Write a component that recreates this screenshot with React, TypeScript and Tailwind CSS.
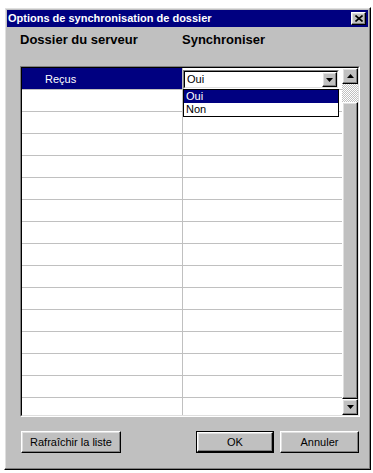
import React from 'react';

const raised =
  'border border-t-white border-l-white border-r-black border-b-black shadow-[inset_-1px_-1px_0_#808080,inset_1px_1px_0_#dfdfdf]';

const Win95Button: React.FC<{ label: string; width: string; isDefault?: boolean }> = ({
  label,
  width,
  isDefault,
}) => (
  <div className={`${width} h-[22px] ${isDefault ? 'border border-black' : ''}`}>
    <button
      className={`w-full h-full bg-[#c0c0c0] ${raised} text-[11px] text-black flex items-center justify-center`}
    >
      {label}
    </button>
  </div>
);

const ScrollArrow: React.FC<{ up?: boolean }> = ({ up }) => (
  <div className={`w-[16px] h-[16px] bg-[#c0c0c0] ${raised} flex items-center justify-center`}>
    <svg width="7" height="4" viewBox="0 0 7 4">
      {up ? <path d="M3.5 0 L7 4 L0 4 Z" fill="black" /> : <path d="M0 0 L7 0 L3.5 4 Z" fill="black" />}
    </svg>
  </div>
);

export default function App() {
  const rows = Array.from({ length: 16 }, (_, i) => i);

  return (
    <div
      className="w-[373px] h-[473px] bg-white pt-[7px] pl-[4px] overflow-hidden"
      style={{ fontFamily: '"Liberation Sans", Arial, sans-serif' }}
    >
      {/* Window */}
      <div className={`w-[367px] h-[463px] bg-[#c0c0c0] ${raised} p-[2px] flex flex-col`}>
        {/* Title bar */}
        <div className="h-[17px] bg-[#000080] flex items-center justify-between pl-[1px] pr-[2px]">
          <span className="text-white text-[11px] font-bold leading-none">
            Options de synchronisation de dossier
          </span>
          <div className={`w-[15px] h-[13px] bg-[#c0c0c0] ${raised} flex items-center justify-center`}>
            <svg width="8" height="7" viewBox="0 0 8 7">
              <path d="M0.5 0.5 L7.5 6.5 M7.5 0.5 L0.5 6.5" stroke="black" strokeWidth="1.6" />
            </svg>
          </div>
        </div>

        {/* Column headers */}
        <div className="flex mt-[3px] pl-[13px] h-[20px] items-center">
          <span className="w-[162px] text-[13px] font-bold text-black">Dossier du serveur</span>
          <span className="text-[13px] font-bold text-black">Synchroniser</span>
        </div>

        {/* List */}
        <div className="relative ml-[13px] mt-[16px] w-[340px] h-[351px] border border-t-[#808080] border-l-[#808080] border-r-white border-b-white">
          <div className="w-full h-full border border-t-black border-l-black border-r-[#dfdfdf] border-b-[#dfdfdf] bg-white flex">
            <div className="flex-1 overflow-hidden">
              {rows.map((i) => (
                <div key={i} className="flex h-[22px] border-b border-[#c0c0c0]">
                  <div
                    className={`w-[161px] h-full border-r border-[#c0c0c0] text-[11px] pl-[23px] pt-[3px] ${
                      i === 0 ? 'bg-[#000080] text-white' : ''
                    }`}
                  >
                    {i === 0 ? 'Reçus' : ''}
                  </div>
                  <div className="flex-1 h-full" />
                </div>
              ))}
            </div>
            {/* Scrollbar */}
            <div className="w-[16px] h-full flex flex-col bg-[repeating-conic-gradient(#c0c0c0_0_25%,#ffffff_0_50%)] bg-[length:2px_2px]">
              <ScrollArrow up />
              <div className="h-[18px]" />
              <div className={`flex-1 bg-[#c0c0c0] ${raised}`} />
              <ScrollArrow />
            </div>
          </div>

          {/* Combo box */}
          <div className="absolute left-[162px] top-[3px] w-[156px] h-[19px] bg-white border border-t-[#808080] border-l-[#808080] border-r-white border-b-white">
            <div className="w-full h-full border border-t-black border-l-black border-r-[#dfdfdf] border-b-[#dfdfdf] flex items-center justify-between">
              <span className="text-[11px] text-black pl-[2px]">Oui</span>
              <div className={`w-[15px] h-[15px] bg-[#c0c0c0] ${raised} flex items-center justify-center`}>
                <svg width="7" height="4" viewBox="0 0 7 4">
                  <path d="M0 0 L7 0 L3.5 4 Z" fill="black" />
                </svg>
              </div>
            </div>
          </div>

          {/* Dropdown list */}
          <div className="absolute left-[162px] top-[22px] w-[156px] bg-white border border-black">
            <div className="h-[13px] bg-[#000080] text-white text-[11px] leading-[13px] pl-[2px]">Oui</div>
            <div className="h-[13px] text-black text-[11px] leading-[13px] pl-[2px]">Non</div>
          </div>
        </div>

        {/* Buttons */}
        <div className="flex items-center mt-[14px] pl-[14px] pr-[9px]">
          <Win95Button label="Rafraîchir la liste" width="w-[100px]" />
          <div className="flex-1" />
          <Win95Button label="OK" width="w-[78px]" isDefault />
          <div className="w-[6px]" />
          <Win95Button label="Annuler" width="w-[79px]" />
        </div>
      </div>
    </div>
  );
}
